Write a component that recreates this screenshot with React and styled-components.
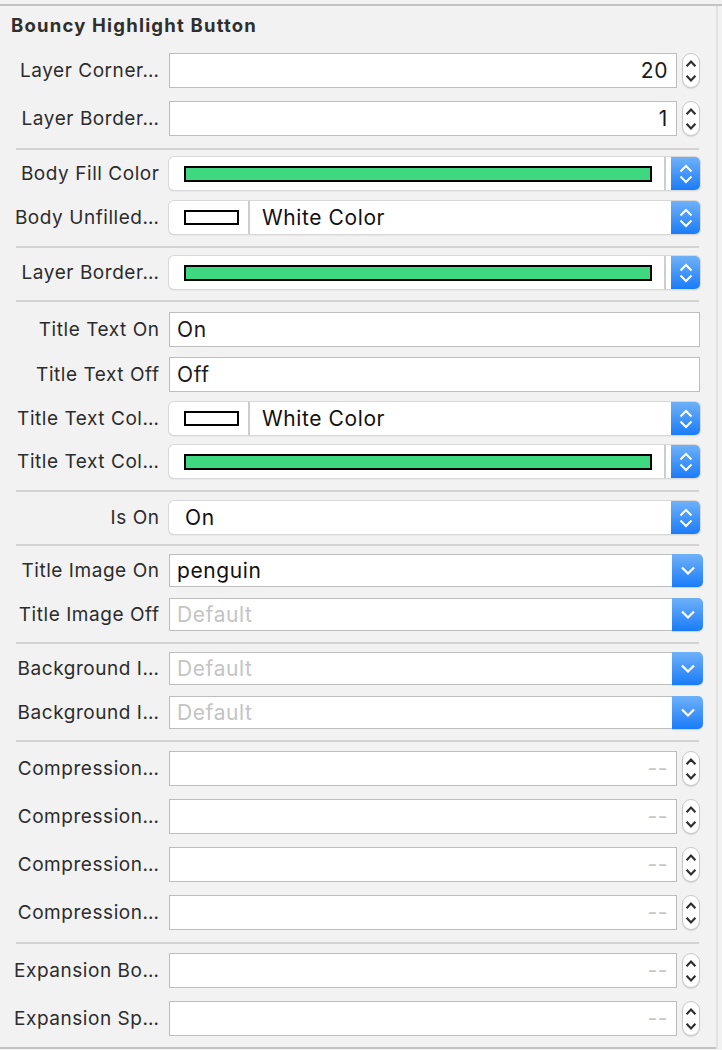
import React from 'react';
import styled, { createGlobalStyle } from 'styled-components';

const GlobalStyle = createGlobalStyle`
  html, body {
    margin: 0;
    padding: 0;
    background: #f2f2f2;
  }
  body {
    font-family: Inter, "Noto Sans", "Liberation Sans", sans-serif;
    color: #2c2c2c;
  }
`;

const Page = styled.div`
  padding-top: 4px;
`;

const Panel = styled.div`
  border-top: 2px solid #c3c3c3;
`;

const Body = styled.div`
  width: 716px;
  border-right: 2px solid #e2e2e2;
`;

const Content = styled.div`
  border-bottom: 2px solid #c4c4c4;
`;

const Header = styled.div`
  height: 38px;
  display: flex;
  align-items: center;
  padding-left: 11px;
  font-size: 18.5px;
  font-weight: 700;
  letter-spacing: 1.2px;
  color: #2f2f2f;
`;

const Section = styled.div`
  display: flex;
  flex-direction: column;
  gap: ${(p) => p.gap}px;
  padding: ${(p) => p.pt}px 0 ${(p) => p.pb}px;
`;

const Divider = styled.div`
  height: 2px;
  background: #d3d3d3;
  margin: 0 17px 0 16px;
`;

const Row = styled.div`
  display: grid;
  grid-template-columns: 159px 1fr;
  column-gap: 10px;
  align-items: center;
  padding-right: 16px;
`;

const Label = styled.div`
  text-align: right;
  font-size: 19px;
  letter-spacing: 0.55px;
  margin-right: -0.5px;
  color: #2c2c2c;
  white-space: nowrap;
`;

const FieldGroup = styled.div`
  display: flex;
  align-items: center;
  gap: 5px;
`;

const Field = styled.div`
  flex: 1;
  height: 35px;
  box-sizing: border-box;
  border: 1px solid #bdbdbd;
  background: #fff;
  display: flex;
  align-items: center;
  justify-content: ${(p) => (p.right ? 'flex-end' : 'flex-start')};
  padding: ${(p) => (p.right ? '0 8px 0 0' : '0 0 0 7px')};
  font-size: 21px;
  letter-spacing: 0.6px;
  color: ${(p) => (p.muted ? '#c4c4c4' : '#1a1a1a')};
`;

const StepperBox = styled.div`
  width: 18px;
  height: 35px;
  box-sizing: border-box;
  border: 1px solid #c9c9c9;
  border-radius: 9px;
  background: #fff;
  box-shadow: 0 1px 1px rgba(0, 0, 0, 0.12);
  display: flex;
  align-items: center;
  justify-content: center;
`;

const PopUp = styled.div`
  height: 33px;
  display: flex;
  border-radius: 5px;
  overflow: hidden;
  background: #fff;
  box-shadow: 0 0 0 1px #d8d8d8, 0 1px 1.5px rgba(0, 0, 0, 0.22);
`;

const SwatchCell = styled.div`
  display: flex;
  align-items: center;
  box-sizing: border-box;
  border-right: 2px solid #cdcdcd;
  padding: 0 ${(p) => (p.wide ? 12 : 9)}px 0 15px;
  flex: ${(p) => (p.wide ? 1 : '0 0 81px')};
`;

const Swatch = styled.div`
  flex: 1;
  height: ${(p) => (p.wide ? 16 : 15)}px;
  box-sizing: border-box;
  border: 2px solid #000;
  background: ${(p) => p.color};
`;

const Gap = styled.div`
  width: 5px;
`;

const PopText = styled.div`
  flex: 1;
  display: flex;
  align-items: center;
  padding-left: ${(p) => p.indent}px;
  font-size: 21px;
  letter-spacing: 0.6px;
  color: #111;
`;

const BlueButton = styled.div`
  flex: 0 0 ${(p) => p.w}px;
  display: flex;
  align-items: center;
  justify-content: center;
  background: linear-gradient(#6fb1f8, #1a7cf8);
`;

const Combo = styled.div`
  height: 33px;
  display: flex;
  margin-right: -3px;
`;

const ComboText = styled.div`
  flex: 1;
  box-sizing: border-box;
  border: 1px solid #bdbdbd;
  border-right: none;
  background: #fff;
  display: flex;
  align-items: center;
  padding-left: 7px;
  font-size: 21px;
  letter-spacing: 0.6px;
  color: ${(p) => (p.muted ? '#c4c4c4' : '#111')};
`;

const ComboButton = styled(BlueButton)`
  border-radius: 0 5px 5px 0;
  box-shadow: 0 1px 1px rgba(0, 0, 0, 0.15);
`;

const UpDown = ({ color = '#fff' }) => (
  <svg width="14" height="20" viewBox="0 0 14 20">
    <path
      d="M1.5 7.5 L7 2 L12.5 7.5 M1.5 12.5 L7 18 L12.5 12.5"
      fill="none"
      stroke={color}
      strokeWidth="2"
    />
  </svg>
);

const ChevronDown = () => (
  <svg width="14" height="9" viewBox="0 0 14 9">
    <path d="M1 1.5 L7 7.5 L13 1.5" fill="none" stroke="#fff" strokeWidth="2.2" />
  </svg>
);

const StepperIcon = () => (
  <svg width="12" height="24" viewBox="0 0 12 24">
    <path
      d="M1.6 7.2 L6 2.6 L10.4 7.2 M1.6 16.8 L6 21.4 L10.4 16.8"
      fill="none"
      stroke="#2e2e2e"
      strokeWidth="2.2"
    />
  </svg>
);

const GREEN = '#3dd87f';

const NumberRow = ({ label, value }) => (
  <Row>
    <Label>{label}</Label>
    <FieldGroup>
      <Field right muted={!value}>
        {value || '--'}
      </Field>
      <StepperBox>
        <StepperIcon />
      </StepperBox>
    </FieldGroup>
  </Row>
);

const TextRow = ({ label, value }) => (
  <Row>
    <Label>{label}</Label>
    <Field>{value}</Field>
  </Row>
);

const ColorRow = ({ label, named }) => (
  <Row>
    <Label>{label}</Label>
    <PopUp>
      {named ? (
        <>
          <SwatchCell>
            <Swatch color="#fff" />
          </SwatchCell>
          <PopText indent={12}>{named}</PopText>
        </>
      ) : (
        <>
          <SwatchCell wide>
            <Swatch wide color={GREEN} />
          </SwatchCell>
          <Gap />
        </>
      )}
      <BlueButton w={29}>
        <UpDown />
      </BlueButton>
    </PopUp>
  </Row>
);

const SelectRow = ({ label, value }) => (
  <Row>
    <Label>{label}</Label>
    <PopUp>
      <PopText indent={16}>{value}</PopText>
      <BlueButton w={29}>
        <UpDown />
      </BlueButton>
    </PopUp>
  </Row>
);

const ComboRow = ({ label, value }) => (
  <Row>
    <Label>{label}</Label>
    <Combo>
      <ComboText muted={!value}>{value || 'Default'}</ComboText>
      <ComboButton w={31}>
        <ChevronDown />
      </ComboButton>
    </Combo>
  </Row>
);

export default function App() {
  return (
    <Page>
      <GlobalStyle />
      <Panel>
        <Body>
          <Content>
            <Header>Bouncy Highlight Button</Header>
            <Section pt={9} pb={12} gap={13}>
              <NumberRow label="Layer Corner…" value="20" />
              <NumberRow label="Layer Border…" value="1" />
            </Section>
            <Divider />
            <Section pt={7} pb={12} gap={11}>
              <ColorRow label="Body Fill Color" />
              <ColorRow label="Body Unfilled…" named="White Color" />
            </Section>
            <Divider />
            <Section pt={8} pb={11} gap={10}>
              <ColorRow label="Layer Border…" />
            </Section>
            <Divider />
            <Section pt={10} pb={12} gap={10}>
              <TextRow label="Title Text On" value="On" />
              <TextRow label="Title Text Off" value="Off" />
              <ColorRow label="Title Text Col…" named="White Color" />
              <ColorRow label="Title Text Col…" />
            </Section>
            <Divider />
            <Section pt={9} pb={10} gap={10}>
              <SelectRow label="Is On" value="On" />
            </Section>
            <Divider />
            <Section pt={8} pb={11} gap={11}>
              <ComboRow label="Title Image On" value="penguin" />
              <ComboRow label="Title Image Off" />
            </Section>
            <Divider />
            <Section pt={8} pb={11} gap={11}>
              <ComboRow label="Background I…" />
              <ComboRow label="Background I…" />
            </Section>
            <Divider />
            <Section pt={9} pb={12} gap={13}>
              <NumberRow label="Compression…" />
              <NumberRow label="Compression…" />
              <NumberRow label="Compression…" />
              <NumberRow label="Compression…" />
            </Section>
            <Divider />
            <Section pt={9} pb={11} gap={13}>
              <NumberRow label="Expansion Bo…" />
              <NumberRow label="Expansion Sp…" />
            </Section>
          </Content>
        </Body>
      </Panel>
    </Page>
  );
}
